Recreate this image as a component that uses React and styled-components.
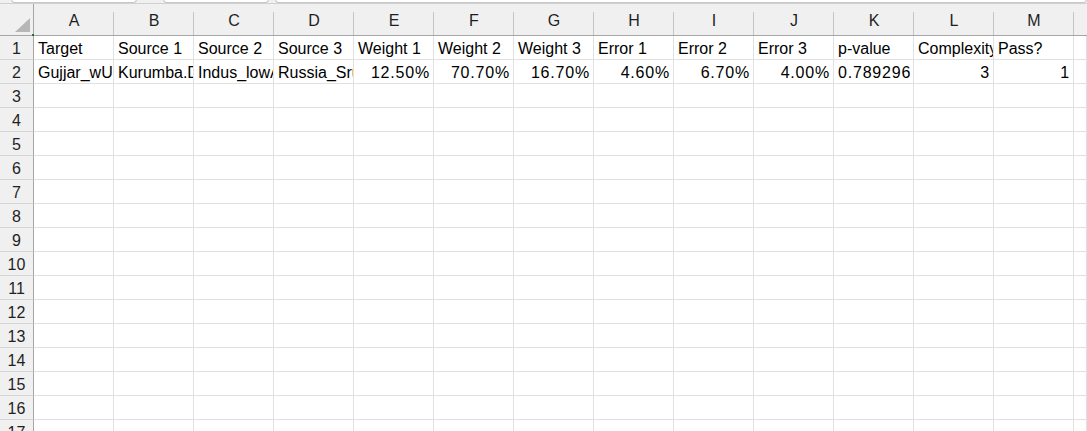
import React from 'react';
import styled, { createGlobalStyle } from 'styled-components';

const GlobalStyle = createGlobalStyle`
  html, body {
    margin: 0;
    padding: 0;
    background: #ffffff;
    overflow: hidden;
  }
  body {
    font-family: "Liberation Sans", Arial, sans-serif;
    color: #000000;
  }
`;

const COLS = ['A', 'B', 'C', 'D', 'E', 'F', 'G', 'H', 'I', 'J', 'K', 'L', 'M'];
const ROW_COUNT = 17;

const rows = {
  1: ['Target', 'Source 1', 'Source 2', 'Source 3', 'Weight 1', 'Weight 2', 'Weight 3', 'Error 1', 'Error 2', 'Error 3', 'p-value', 'Complexity', 'Pass?'],
  2: ['Gujjar_wUP', 'Kurumba.DG', 'Indus_lowASI', 'Russia_Srubnaya', 12.5, 70.7, 16.7, 4.6, 6.7, 4.0, 0.789296, 3, 1],
};

// percentage columns E..J
const PERCENT_COLS = [4, 5, 6, 7, 8, 9];

// ---------- WINDOW
const Window = styled.div`
  height: 100vh;
  display: flex;
  flex-direction: column;
  overflow: hidden;
  background: #ffffff;
`;

// ---------- TAB STRIP (bottom edge of the formula bar area)
const TabStrip = styled.div`
  height: 3px;
  flex: none;
  display: flex;
  gap: 0;
  background: #f0f0f0;
  border-bottom: 1px solid #d0d0d0;
  position: relative;
`;

const TabStub = styled.div`
  margin-left: ${p => p.$offset}px;
  width: ${p => p.$width}px;
  height: 4px;
  margin-top: -1px;
  background: #ffffff;
  border: 1px solid #c8c8c8;
  border-top: none;
  border-radius: 0 0 5px 5px;
  box-sizing: border-box;
  flex: ${p => (p.$grow ? 1 : 'none')};
`;

// ---------- GRID
const Grid = styled.div`
  display: grid;
  grid-template-columns: 34px repeat(13, 80px) 1fr;
  grid-template-rows: 32px;
  grid-auto-rows: 24px;
`;

const Corner = styled.div`
  background: #f0f0f0;
  border-right: 1px solid #a6a6a6;
  border-bottom: 1px solid #a6a6a6;
  position: relative;

  &::before {
    content: '';
    position: absolute;
    right: 3px;
    bottom: 3px;
    width: 15px;
    height: 14px;
    background: #b7b7b7;
    clip-path: polygon(100% 0, 100% 100%, 0 100%);
  }

  &::after {
    content: '';
    position: absolute;
    right: -1px;
    bottom: -1px;
    width: 2px;
    height: 2px;
    background: #1e7145;
  }
`;

const ColHeader = styled.div`
  background: #f0f0f0;
  border-bottom: 1px solid #a6a6a6;
  position: relative;
  font-size: 16px;
  line-height: 31px;
  padding-top: 1px;
  box-sizing: border-box;
  text-align: center;
  color: #1f1f1f;

  &::after {
    content: '';
    position: absolute;
    right: 0;
    top: 8px;
    bottom: 0;
    width: 1px;
    background: ${p => (p.$last ? 'transparent' : '#c4c4c4')};
  }
`;

const RowHeader = styled.div`
  background: #f0f0f0;
  border-right: 1px solid #a6a6a6;
  border-bottom: 1px solid #d4d4d4;
  font-size: 16px;
  line-height: 23px;
  padding-top: 1px;
  box-sizing: border-box;
  text-align: center;
  color: #1f1f1f;
`;

const Cell = styled.div`
  border-right: 1px solid #e1e1e1;
  border-bottom: 1px solid #e1e1e1;
  box-sizing: border-box;
  font-size: 16px;
  line-height: 23px;
  padding: 1px 3px 0 4px;
  white-space: nowrap;
  overflow: hidden;
  text-align: ${p => (p.$numeric ? 'right' : 'left')};
  letter-spacing: ${p => (p.$numeric ? '0.8px' : '0')};
`;

function formatValue(value, colIndex) {
  if (typeof value !== 'number') return value;
  if (PERCENT_COLS.includes(colIndex)) return value.toFixed(2) + '%';
  return String(value);
}

export default function App() {
  const rowNumbers = Array.from({ length: ROW_COUNT }, (_, i) => i + 1);

  return (
    <Window>
      <GlobalStyle />
      <TabStrip>
        <TabStub $offset={11} $width={126} />
        <TabStub $offset={26} $width={106} />
        <TabStub $offset={6} $grow />
      </TabStrip>

      <Grid>
        <Corner />
        {COLS.map(c => (
          <ColHeader key={c}>{c}</ColHeader>
        ))}
        <ColHeader $last />

        {rowNumbers.map(r => (
          <React.Fragment key={r}>
            <RowHeader>{r}</RowHeader>
            {COLS.map((c, i) => {
              const value = rows[r] ? rows[r][i] : '';
              return (
                <Cell key={c} $numeric={typeof value === 'number'}>
                  {formatValue(value, i)}
                </Cell>
              );
            })}
            <Cell />
          </React.Fragment>
        ))}
      </Grid>
    </Window>
  );
}
